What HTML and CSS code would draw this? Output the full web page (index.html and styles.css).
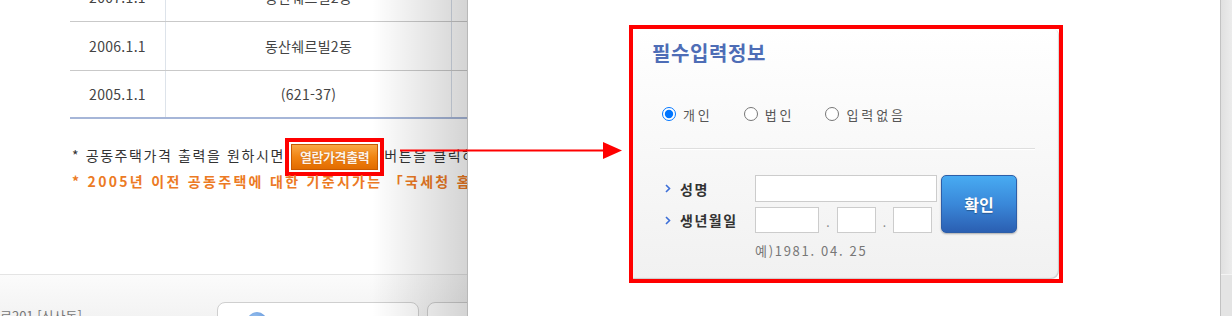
FILE: index.html
```html
<!DOCTYPE html>
<html lang="ko">
<head>
<meta charset="utf-8">
<title>필수입력정보</title>
<link rel="stylesheet" href="styles.css">
</head>
<body>
<div class="screen">
  <div class="page">
    <div class="price-table">
      <div class="row"><div class="cell date">2007.1.1</div><div class="cell name">동산쉐르빌2동</div><div class="cell more"></div></div>
      <div class="row"><div class="cell date">2006.1.1</div><div class="cell name">동산쉐르빌2동</div><div class="cell more"></div></div>
      <div class="row last"><div class="cell date">2005.1.1</div><div class="cell name">(621-37)</div><div class="cell more"></div></div>
    </div>
    <div class="notes">
      <p class="note">* 공동주택가격 출력을 원하시면<span class="btn-orange">열람가격출력</span>버튼을 클릭하시기 바랍니다.</p>
      <p class="note warn">* 2005년 이전 공동주택에 대한 기준시가는 「국세청 홈페이지」에서 확인하십시오.</p>
    </div>
    <div class="page-foot">
      <span class="addr">대로201 [신사동]</span>
      <span class="foot-btn"><i class="foot-dot"></i></span>
      <span class="foot-btn"></span>
    </div>
    <div class="shade"></div>
  </div>

  <div class="popup">
    <div class="highlight">
      <div class="panel">
        <h2 class="title">필수입력정보</h2>
        <div class="radios">
          <label class="radio"><input type="radio" name="kind" checked>개인</label>
          <label class="radio"><input type="radio" name="kind">법인</label>
          <label class="radio"><input type="radio" name="kind">입력없음</label>
        </div>
        <div class="sep"></div>
        <div class="form">
          <div class="label"><svg class="chev" viewBox="0 0 6 9"><polyline points="1,1 4.5,4.5 1,8" fill="none" stroke="#3d6fd8" stroke-width="1.6"/></svg>성명</div>
          <input class="field name-field" type="text">
          <button class="ok" type="button">확인</button>
          <div class="label"><svg class="chev" viewBox="0 0 6 9"><polyline points="1,1 4.5,4.5 1,8" fill="none" stroke="#3d6fd8" stroke-width="1.6"/></svg>생년월일</div>
          <div class="birth">
            <input class="field f-year" type="text">
            <span class="dot-sep">.</span>
            <input class="field f-md" type="text">
            <span class="dot-sep">.</span>
            <input class="field f-md" type="text">
          </div>
          <div class="hint">예)1981. 04. 25</div>
        </div>
      </div>
    </div>
  </div>

  <div class="edge"><div class="edge-top"></div><div class="edge-bottom"></div></div>

  <svg class="arrow" viewBox="0 0 226 22" width="226" height="22">
    <line x1="2" y1="10.5" x2="208" y2="10.5" stroke="#ff0000" stroke-width="2"/>
    <polygon points="205,2 224,10.5 205,19" fill="#ff0000"/>
  </svg>
</div>
</body>
</html>
```

FILE: styles.css
```css
* { box-sizing: border-box; }
html, body { margin: 0; padding: 0; }
body {
  width: 1232px;
  height: 316px;
  overflow: hidden;
  background: #fff;
  font-family: "Noto Sans CJK KR", "Noto Sans", sans-serif;
}
.screen {
  position: relative;
  display: flex;
  width: 1232px;
  height: 316px;
  overflow: hidden;
}

/* background page */
.page {
  position: relative;
  flex: 0 0 468px;
  height: 316px;
  overflow: hidden;
  background: #fff;
  border-right: 1px solid #b8b8b8;
}
.price-table {
  margin: -27px 0 0 70px;
  width: 470px;
  font-size: 14px;
  color: #444;
}
.row {
  display: flex;
  height: 49px;
  border-bottom: 1px solid #c9c9c9;
}
.row.last {
  height: 48px;
  border-bottom: 2px solid #a6b6d8;
}
.cell {
  display: flex;
  align-items: center;
  justify-content: center;
  white-space: nowrap;
  letter-spacing: 0.3px;
}
.cell.date { flex: 0 0 95px; }
.cell.name { flex: 0 0 286px; border-left: 1px solid #dde3ea; }
.cell.more { flex: 1; border-left: 1px solid #d3dbe6; }

.notes {
  height: 155px;
  padding: 24px 0 0 72px;
}
.note {
  margin: 0;
  line-height: 25px;
  font-size: 14px;
  color: #333;
  white-space: nowrap;
  letter-spacing: 1.6px;
}
.note.warn {
  color: #ec7a24;
  font-weight: bold;
  font-size: 14px;
  letter-spacing: 2.3px;
}
.btn-orange {
  display: inline-block;
  height: 26px;
  line-height: 24px;
  padding: 0 8px;
  margin: -1px 6px -1px 6px;
  vertical-align: middle;
  border: 1px solid #c85a00;
  border-radius: 0;
  background: linear-gradient(#f9a844, #f18412 50%, #e26c00);
  color: #fff3e6;
  font-size: 13px;
  font-weight: bold;
  letter-spacing: -0.4px;
  text-shadow: 0 0 1px #a84800;
  outline: 4px solid #ff0000;
  outline-offset: 2px;
}

.page-foot {
  display: flex;
  align-items: flex-start;
  height: 42px;
  padding-top: 27px;
  border-top: 1px solid #e4e4e4;
  background: linear-gradient(#fbfbfb, #f3f3f3);
}
.addr {
  flex: 0 0 217px;
  margin-top: 6px;
  font-size: 13px;
  line-height: 16px;
  color: #777;
  white-space: nowrap;
  text-indent: -12px;
}
.foot-btn {
  position: relative;
  flex: 0 0 202px;
  height: 30px;
  margin-right: 8px;
  background: #fff;
  border: 1px solid #cfcfcf;
  border-radius: 8px;
}
.foot-dot {
  position: absolute;
  left: 29px;
  top: 9px;
  width: 20px;
  height: 20px;
  border-radius: 50%;
  background: radial-gradient(circle at 40% 35%, #9cc4f0, #4f86d4);
}
.shade {
  position: absolute;
  top: 0;
  right: 0;
  bottom: 0;
  width: 95px;
  background: linear-gradient(to right, rgba(0,0,0,0), rgba(0,0,0,0.17));
  pointer-events: none;
}

/* popup */
.popup {
  flex: 0 0 752px;
  height: 316px;
  padding: 25px 0 0 161px;
  background: #fff;
}
.highlight {
  width: 434px;
  height: 258px;
  border: 4px solid #ff0000;
  background: #fff;
}
.panel {
  height: 100%;
  padding: 11px 24px 0 27px;
  background: linear-gradient(#ffffff, #f1f1f1);
  border-radius: 0 6px 8px 0;
  box-shadow: inset -1px -1px 1px rgba(0,0,0,0.16);
}
.title {
  margin: 0 0 0 -8px;
  font-size: 20px;
  line-height: 26px;
  font-weight: bold;
  color: #4e6db6;
  letter-spacing: 0.6px;
}
.radios {
  display: flex;
  align-items: center;
  height: 20px;
  margin-top: 38px;
}
.radio {
  display: flex;
  align-items: center;
  margin-right: 29px;
  font-size: 13px;
  color: #555;
  letter-spacing: 2.9px;
}
.radio input {
  width: 14px;
  height: 14px;
  margin: 0 7px 0 2px;
}
.sep {
  height: 2px;
  margin-top: 24px;
  border-top: 1px solid #dedede;
  border-bottom: 1px solid #ffffff;
}
.form {
  display: grid;
  grid-template-columns: 95px 182px 80px;
  grid-template-rows: 27px 26px auto;
  row-gap: 5px;
  margin-top: 25px;
}
.label {
  display: flex;
  align-items: center;
  padding-left: 5px;
  font-size: 14px;
  font-weight: bold;
  color: #333;
  letter-spacing: 1.5px;
}
.chev {
  width: 6px;
  height: 9px;
  margin-right: 9px;
}
.field {
  display: block;
  margin: 0;
  padding: 0 4px;
  height: 26px;
  border: 1px solid #cccccc;
  background: #fff;
  border-radius: 0;
  outline: none;
}
.name-field { width: 182px; height: 27px; }
.birth { display: flex; align-items: center; }
.f-year { width: 64px; }
.f-md { width: 39px; }
.dot-sep {
  width: 18px;
  text-align: center;
  font-size: 12px;
  line-height: 26px;
  padding-top: 4px;
  color: #888;
}
.birth .dot-sep:nth-of-type(2) { width: 17px; }
.ok {
  grid-column: 3;
  grid-row: 1 / span 2;
  width: 76px;
  height: 58px;
  margin: 0 0 0 4px;
  padding: 0;
  border: 1px solid #2d5ea8;
  border-radius: 5px;
  background: linear-gradient(#48abf2, #3a88d9 50%, #2b5fb2);
  color: #fff;
  font-family: "Noto Sans CJK KR", "Noto Sans", sans-serif;
  font-size: 16px;
  font-weight: bold;
  text-shadow: 0 1px 1px rgba(0,0,0,0.3);
  box-shadow: 0 1px 2px rgba(0,0,0,0.3);
}
.hint {
  grid-column: 2 / span 2;
  margin-top: 4px;
  font-size: 13px;
  line-height: 18px;
  color: #777;
  letter-spacing: 1.7px;
}

/* right edge of underlying page */
.edge {
  flex: 0 0 12px;
  display: flex;
  flex-direction: column;
  border-left: 1px solid #c2c2c2;
}
.edge-top {
  height: 274px;
  background: linear-gradient(to right, #e0e0e0, #ececec);
}
.edge-bottom {
  flex: 1;
  border-top: 1px solid #f4f4f4;
  background: #e4e4e4;
}

/* annotation arrow */
.arrow {
  position: absolute;
  left: 398px;
  top: 140px;
  z-index: 5;
}
```
